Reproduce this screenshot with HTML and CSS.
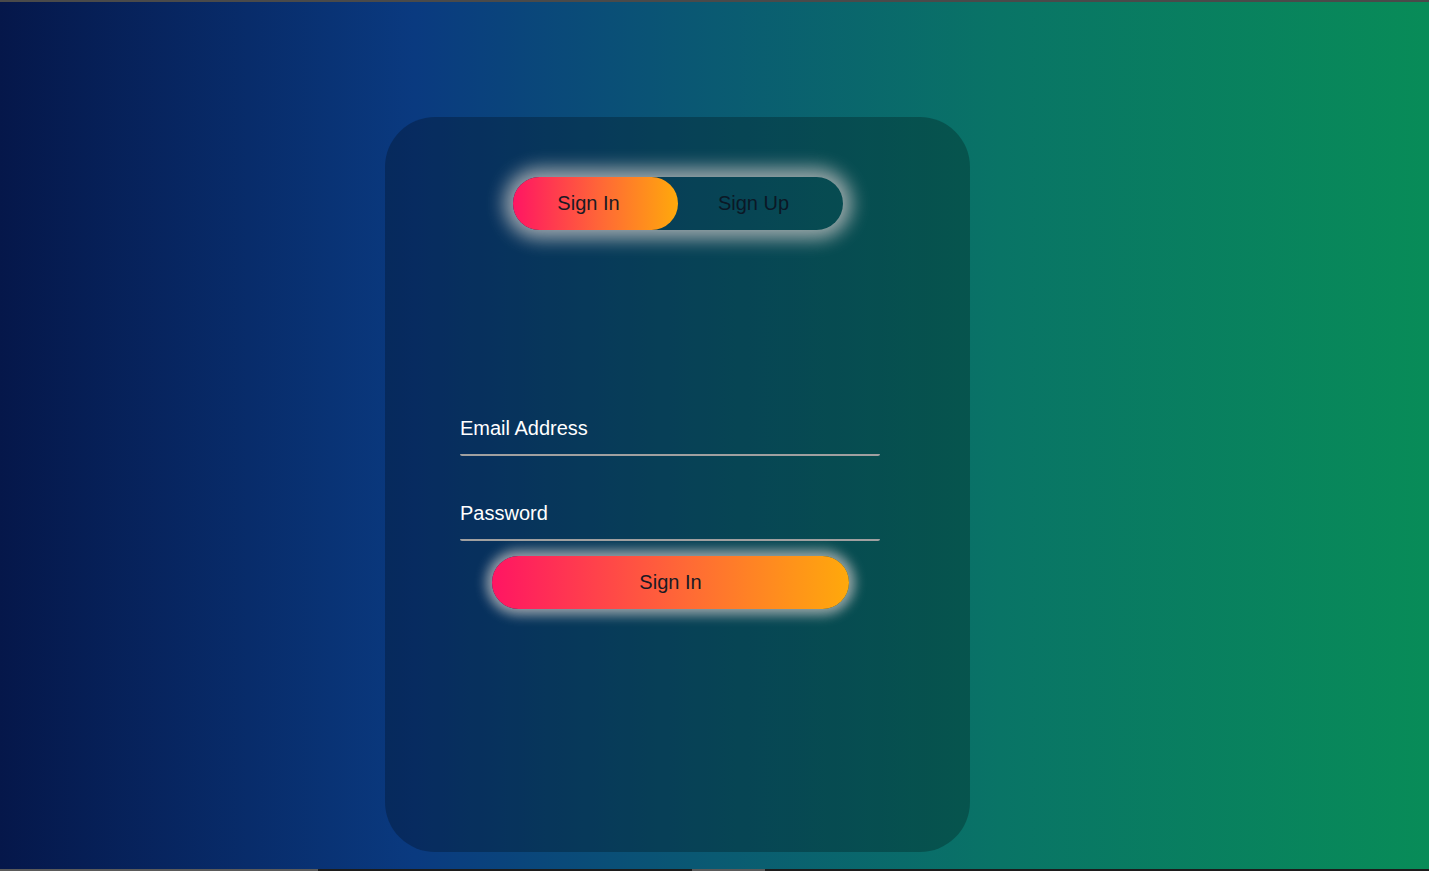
FILE: index.html
```html
<!DOCTYPE html>
<html lang="en">
<head>
<meta charset="utf-8">
<title>Sign In</title>
<link rel="stylesheet" href="styles.css">
</head>
<body>
<div class="topbar"></div>
<main class="stage">
  <section class="card">
    <div class="toggle">
      <button class="tab active">Sign In</button>
      <button class="tab">Sign Up</button>
    </div>
    <form class="form">
      <div class="field"><span class="label">Email Address</span></div>
      <div class="field"><span class="label">Password</span></div>
      <button type="button" class="submit">Sign In</button>
    </form>
  </section>
</main>
<div class="bottombar">
  <span class="seg gray s1"></span>
  <span class="seg dark s2"></span>
  <span class="seg gray s3"></span>
  <span class="seg dark s4"></span>
</div>
</body>
</html>
```
FILE: styles.css
```css
* { box-sizing: border-box; }
html, body { margin: 0; padding: 0; }
body {
  width: 1429px;
  height: 871px;
  overflow: hidden;
  font-family: "Liberation Sans", Arial, sans-serif;
  background: linear-gradient(90deg, #05174a 0%, #0a3a80 29%, #0a5a72 50%, #097466 70%, #088c58 100%);
  display: flex;
  flex-direction: column;
}
.topbar {
  height: 2px;
  background: #4a4a4a;
  flex: none;
}
.stage {
  flex: 1;
  padding: 115px 0 0 385px;
}
.card {
  width: 585px;
  height: 735px;
  border-radius: 50px;
  background: rgba(0, 0, 0, 0.25);
  padding-top: 60px;
  display: flex;
  flex-direction: column;
}
.toggle {
  align-self: center;
  width: 330px;
  height: 53px;
  border-radius: 27px;
  display: flex;
  box-shadow: 0 0 18px 9px rgba(190, 190, 190, 0.8);
}
.tab {
  flex: 1;
  border: 0;
  background: transparent;
  font-family: inherit;
  font-size: 20px;
  color: #0b1826;
  border-radius: 27px;
  padding: 0 13px 0 0;
}
.tab.active {
  background: linear-gradient(90deg, #ff1563, #ff6a35 55%, #ffa90b);
  color: #1a1a24;
}
.form {
  margin-top: 187px;
  padding-left: 75px;
  display: flex;
  flex-direction: column;
}
.field {
  width: 420px;
  padding-bottom: 14px;
  border-bottom: 2px solid #a0a0a0;
  border-radius: 0 0 2px 2px;
}
.field + .field { margin-top: 46px; }
.label {
  display: block;
  color: #ffffff;
  font-size: 20px;
  line-height: 23px;
}
.submit {
  margin: 15px 0 0 32px;
  width: 357px;
  height: 53px;
  border: 0;
  border-radius: 27px;
  font-family: inherit;
  font-size: 20px;
  color: #1a1a24;
  background: linear-gradient(90deg, #ff1563, #ff6a35 55%, #ffa90b);
  box-shadow: 0 0 12px 6px rgba(190, 190, 190, 0.78);
}
.bottombar {
  height: 2px;
  flex: none;
  display: flex;
}
.seg { height: 2px; }
.gray { background: #5a5a5a; }
.dark { background: #1c1c1c; }
.s1 { width: 318px; }
.s2 { width: 374px; }
.s3 { width: 73px; }
.s4 { flex: 1; }
```
